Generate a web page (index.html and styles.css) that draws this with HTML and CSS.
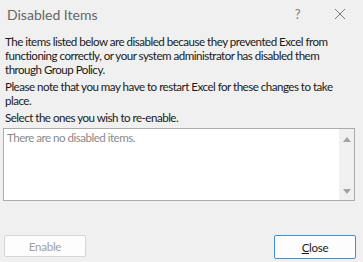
FILE: index.html
```html
<!DOCTYPE html>
<html>

<head>
  <title>Disabled Items</title>
  <link rel="stylesheet" href="styles.css">
</head>

<body>
  <div class="dialog">
    <div class="titlebar">
      <span class="title">Disabled Items</span>
      <span class="help">?</span>
      <svg class="close-x" width="12" height="12" viewBox="0 0 12 12">
        <path d="M1 1 L11 11 M11 1 L1 11" stroke="#7a7a7a" stroke-width="1" fill="none" />
      </svg>
    </div>

    <div class="content">
      <p>The items listed below are disabled because they prevented Excel from<br>
        functioning correctly, or your system administrator has disabled them<br>
        through Group Policy.</p>
      <p>Please note that you may have to restart Excel for these changes to take<br>
        place.</p>
      <p>Select the ones you wish to re-enable.</p>

      <div class="listbox">
        <div class="list-items">There are no disabled items.</div>
        <div class="scrollbar">
          <span class="arrow up"></span>
          <span class="arrow down"></span>
        </div>
      </div>
    </div>

    <div class="buttons">
      <button class="btn" disabled>Enable</button>
      <button class="btn primary"><u>C</u>lose</button>
    </div>
  </div>
</body>

</html>
```

FILE: styles.css
```css
body {
  margin: 0;
  font-family: Lato, "Noto Sans", sans-serif;
  font-size: 11.6px;
  letter-spacing: -0.52px;
  color: #1a1a1a;
  background: #f0f0f0;
}

.dialog {
  width: 363px;
  height: 262px;
  display: flex;
  flex-direction: column;
  background: #f0f0f0;
}

.titlebar {
  height: 28px;
  display: flex;
  align-items: center;
  padding-left: 7px;
}

.title {
  flex: 1;
  font-size: 14px;
  letter-spacing: 0;
  color: #666;
}

.help {
  font-size: 13px;
  color: #7a7a7a;
  margin-right: 34px;
}

.close-x {
  margin-right: 17px;
}

.content {
  padding: 7px 8px 0 3px;
}

.content p {
  margin: 0 0 3px 2px;
  line-height: 14px;
  white-space: nowrap;
}

.listbox {
  margin-top: 2px;
  height: 71px;
  border: 1px solid #ababab;
  background: #fff;
  display: flex;
}

.list-items {
  flex: 1;
  padding: 2px 3px;
  color: #8a8a8a;
}

.scrollbar {
  width: 15px;
  background: #f0f0f0;
  display: flex;
  flex-direction: column;
  justify-content: space-between;
  align-items: center;
  padding: 8px 0 6px;
}

.arrow {
  width: 0;
  height: 0;
  border-left: 4px solid transparent;
  border-right: 4px solid transparent;
}

.arrow.up {
  border-bottom: 5px solid #a3a3a3;
}

.arrow.down {
  border-top: 5px solid #a3a3a3;
}

.buttons {
  margin-top: auto;
  display: flex;
  justify-content: space-between;
  padding: 0 7px 3px 4px;
}

.btn {
  font-family: inherit;
  font-size: 11.6px;
  letter-spacing: -0.3px;
  width: 82px;
  height: 22px;
  background: #fdfdfd;
  border: 1px solid #d6d6d6;
  border-radius: 2px;
  color: #a0a0a0;
  padding: 0;
}

.btn.primary {
  height: 24px;
  border-color: #3e8ede;
  color: #1a1a1a;
}
```
